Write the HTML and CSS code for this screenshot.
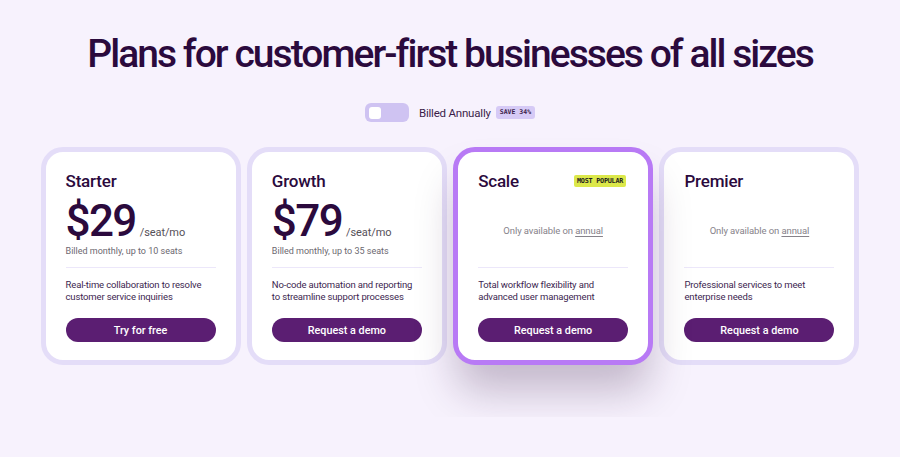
FILE: index.html
```html
<!DOCTYPE html>
<html lang="en">
<head>
<meta charset="utf-8">
<title>Pricing</title>
<link rel="stylesheet" href="styles.css">
</head>
<body>
<main class="pricing">
  <h1 class="title">Plans for customer-first businesses of all sizes</h1>
  <div class="billing">
    <span class="toggle"><span class="knob"></span></span>
    <span class="billing-label">Billed Annually</span>
    <span class="save">SAVE 34%</span>
  </div>
  <div class="cards">
    <section class="card">
      <div class="card-head"><h2 class="plan">Starter</h2></div>
      <div class="pricebox">
        <div class="price"><span class="amount">$29</span><span class="unit">/seat/mo</span></div>
        <div class="billed">Billed monthly, up to 10 seats</div>
      </div>
      <hr class="divider">
      <p class="desc">Real-time collaboration to resolve customer service inquiries</p>
      <a class="btn" href="#">Try for free</a>
    </section>
    <section class="card">
      <div class="card-head"><h2 class="plan">Growth</h2></div>
      <div class="pricebox">
        <div class="price"><span class="amount">$79</span><span class="unit">/seat/mo</span></div>
        <div class="billed">Billed monthly, up to 35 seats</div>
      </div>
      <hr class="divider">
      <p class="desc">No-code automation and reporting to streamline support processes</p>
      <a class="btn" href="#">Request a demo</a>
    </section>
    <section class="card card-popular">
      <div class="card-head"><h2 class="plan">Scale</h2><span class="popular">MOST POPULAR</span></div>
      <div class="pricebox pricebox-annual">
        <div class="annual-note">Only available on <a href="#" class="annual-link">annual</a></div>
      </div>
      <hr class="divider">
      <p class="desc">Total workflow flexibility and advanced user management</p>
      <a class="btn" href="#">Request a demo</a>
    </section>
    <section class="card">
      <div class="card-head"><h2 class="plan">Premier</h2></div>
      <div class="pricebox pricebox-annual">
        <div class="annual-note">Only available on <a href="#" class="annual-link">annual</a></div>
      </div>
      <hr class="divider">
      <p class="desc">Professional services to meet enterprise needs</p>
      <a class="btn" href="#">Request a demo</a>
    </section>
  </div>
</main>
</body>
</html>
```

FILE: styles.css
```css
html, body {
  margin: 0;
  padding: 0;
  background: #f7f2fd;
}
body {
  font-family: Roboto, Inter, "Noto Sans", sans-serif;
  color: #2b0a3d;
}
.pricing {
  overflow: hidden;
  height: 417px;
  padding-top: 31px;
  box-sizing: border-box;
}
.title {
  margin: 0;
  text-align: center;
  font-size: 39px;
  line-height: 46px;
  font-weight: 500;
  letter-spacing: -1.95px;
  color: #2b0a3d;
}
.billing {
  margin-top: 26px;
  display: flex;
  justify-content: center;
  align-items: center;
  height: 19px;
}
.toggle {
  width: 44px;
  height: 19px;
  border-radius: 6px;
  background: #cfc3f2;
  display: flex;
  align-items: center;
  padding-left: 4px;
  box-sizing: border-box;
}
.knob {
  width: 12px;
  height: 12px;
  border-radius: 3px;
  background: #fff;
}
.billing-label {
  margin-left: 10px;
  font-size: 11.5px;
  color: #3b1d4a;
  letter-spacing: -0.2px;
}
.save {
  margin-left: 5px;
  background: #d6caf6;
  border-radius: 3px;
  padding: 0 4px;
  height: 13px;
  line-height: 13px;
  font-family: "DejaVu Sans Mono", "Liberation Mono", monospace;
  font-weight: bold;
  font-size: 6.5px;
  color: #3b1d4a;
}
.cards {
  margin-top: 25px;
  display: flex;
  justify-content: center;
  gap: 6.3px;
}
.card {
  width: 200px;
  box-sizing: border-box;
  background: #fff;
  border: 5px solid #e4ddf8;
  border-radius: 22px;
  padding: 19px 20px 18px;
  display: flex;
  flex-direction: column;
}
.card-popular {
  border-color: #b87af5;
  box-shadow: 0 30px 42px -4px rgba(50, 20, 60, 0.26);
  position: relative;
  z-index: 1;
}
.card-head {
  display: flex;
  justify-content: space-between;
  align-items: center;
  height: 20px;
}
.plan {
  margin: 0;
  font-size: 17px;
  line-height: 20px;
  font-weight: 500;
  letter-spacing: -0.2px;
  color: #2b0a3d;
}
.popular {
  background: #dce84a;
  border-radius: 2px;
  padding: 0 3px;
  height: 12px;
  line-height: 12px;
  font-family: "DejaVu Sans Mono", "Liberation Mono", monospace;
  font-weight: bold;
  font-size: 6.8px;
  letter-spacing: -0.25px;
  color: #1f1f1f;
  margin-right: 2px;
}
.pricebox {
  height: 76px;
  padding-top: 8px;
  box-sizing: border-box;
}
.pricebox-annual {
  padding-top: 0;
  display: flex;
  align-items: center;
  justify-content: center;
}
.price {
  display: flex;
  align-items: baseline;
  height: 45px;
}
.amount {
  font-size: 44px;
  line-height: 45px;
  font-weight: 500;
  letter-spacing: -1.6px;
  color: #2b0a3d;
}
.unit {
  margin-left: 4px;
  font-size: 11px;
  color: #555058;
  letter-spacing: -0.1px;
}
.billed {
  font-size: 9px;
  line-height: 14px;
  color: #6c6870;
}
.annual-note {
  font-size: 9.5px;
  color: #86828a;
  letter-spacing: -0.1px;
  padding-top: 2px;
}
.annual-link {
  color: #86828a;
  text-decoration: underline;
  text-underline-offset: 2px;
}
.divider {
  margin: 0;
  border: 0;
  height: 1px;
  background: #ece7fa;
}
.desc {
  margin: 11px 0 0;
  font-size: 9.5px;
  line-height: 12px;
  color: #3d1f50;
  letter-spacing: -0.15px;
  height: 24px;
}
.btn {
  margin-top: 15px;
  display: flex;
  justify-content: center;
  align-items: center;
  height: 24px;
  border-radius: 12px;
  background: #5b1e72;
  color: #fff;
  text-decoration: none;
  font-size: 10.8px;
  font-weight: 500;
}
```
